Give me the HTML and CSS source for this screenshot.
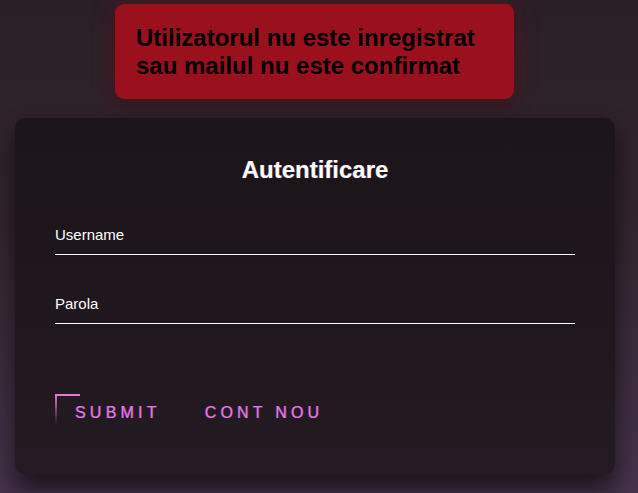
FILE: index.html
```html
<!DOCTYPE html>
<html lang="ro">
<head>
<meta charset="utf-8">
<title>Autentificare</title>
<link rel="stylesheet" href="styles.css">
</head>
<body>
<div class="page">
  <div class="alert">Utilizatorul nu este inregistrat sau mailul nu este confirmat</div>
  <div class="card">
    <h2 class="title">Autentificare</h2>
    <form class="form">
      <div class="field">
        <input class="input" type="text" required>
        <label class="label">Username</label>
      </div>
      <div class="field">
        <input class="input" type="password" required>
        <label class="label">Parola</label>
      </div>
      <div class="actions">
        <a class="btn btn-submit"><span class="corner"></span>SUBMIT</a>
        <a class="btn">CONT NOU</a>
      </div>
    </form>
  </div>
</div>
</body>
</html>
```
FILE: styles.css
```css
html, body {
  margin: 0;
  padding: 0;
  height: 100%;
}
body {
  background: linear-gradient(180deg, #2a1f27 0%, #33252e 45%, #46334c 100%);
  font-family: "Liberation Sans", Arial, sans-serif;
  overflow: hidden;
}
.page {
  display: flex;
  flex-direction: column;
  padding: 4px 0 0 15px;
  width: 600px;
}
.alert {
  align-self: flex-start;
  margin-left: 100px;
  width: 357px;
  padding: 20px 21px 19px 21px;
  background: #9a111d;
  border-radius: 9px;
  color: #000;
  font-weight: bold;
  font-size: 24px;
  line-height: 28px;
  box-shadow: 0 0 22px rgba(140, 15, 25, 0.45), 0 6px 14px rgba(0, 0, 0, 0.25);
}
.card {
  margin-top: 19px;
  height: 357px;
  box-sizing: border-box;
  padding: 38px 40px 0 40px;
  background: linear-gradient(180deg, #1b1419 0%, #1f171d 50%, #241a23 100%);
  border-radius: 10px;
  box-shadow: 0 15px 25px rgba(0, 0, 0, 0.6);
}
.title {
  margin: 0;
  text-align: center;
  color: #fff;
  font-size: 24px;
  font-weight: bold;
  line-height: 28px;
  text-shadow: -0.5px 0 rgba(80, 140, 255, 0.5), 0.5px 0 rgba(255, 80, 60, 0.5);
}
.form {
  margin-top: 32px;
}
.field {
  position: relative;
}
.input {
  display: block;
  width: 100%;
  box-sizing: border-box;
  padding: 10px 0;
  margin: 0 0 30px 0;
  font-family: inherit;
  font-size: 15px;
  line-height: 18px;
  color: #fff;
  border: none;
  border-bottom: 1px solid #fff;
  outline: none;
  background: transparent;
}
.label {
  position: absolute;
  top: 0;
  left: 0;
  padding: 10px 0;
  font-size: 15px;
  line-height: 18px;
  color: #fff;
  pointer-events: none;
}
.actions {
  display: flex;
  gap: 4px;
  margin-top: 70px;
}
.btn {
  position: relative;
  display: inline-block;
  padding: 10px 20px 9px 20px;
  color: #ea78ea;
  font-size: 16px;
  line-height: 18px;
  letter-spacing: 4.2px;
  text-decoration: none;
  text-shadow: -0.5px 0 rgba(100, 100, 255, 0.55), 0.5px 0 rgba(255, 70, 100, 0.55);
}
.corner {
  position: absolute;
  top: 0;
  left: 0;
  width: 25px;
  height: 30px;
  border-top: 2px solid #e67ad6;
  box-sizing: border-box;
}
.corner::before {
  content: "";
  position: absolute;
  top: -2px;
  left: 0;
  width: 2px;
  height: 30px;
  background: linear-gradient(180deg, #e67ad6 0%, rgba(230, 122, 214, 0) 100%);
}
```
